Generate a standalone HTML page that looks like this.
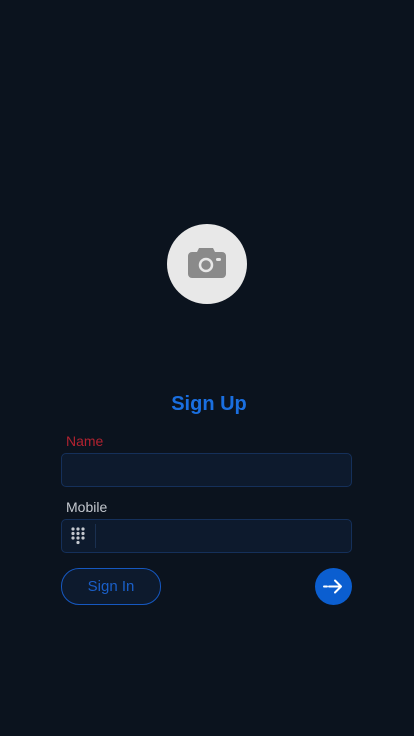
<!DOCTYPE html>
<html><head><style>
body{margin:0;width:414px;height:736px;background:#0b131e;position:relative;font-family:"Liberation Sans",sans-serif;overflow:hidden}
.a{position:absolute}
.inp{position:absolute;left:61px;width:289px;height:32px;border:1px solid #15305a;border-radius:5px;background:#0d1a2d}
</style></head><body>
<div class="a" style="left:167px;top:224px;width:80px;height:80px;border-radius:50%;background:#e8e8e8"></div>
<svg class="a" style="left:185px;top:244px" width="44" height="40" viewBox="0 0 44 40">
<path d="M14 4 h14 l2 4 h7 a4 4 0 0 1 4 4 v18 a4 4 0 0 1 -4 4 h-30 a4 4 0 0 1 -4 -4 v-18 a4 4 0 0 1 4 -4 h5z" fill="#8a8a8a"/>
<circle cx="21" cy="21" r="6" fill="none" stroke="#e8e8e8" stroke-width="2.5"/>
<rect x="31" y="14" width="5" height="3" rx="1.5" fill="#e8e8e8"/>
</svg>
<div class="a" style="left:0;width:414px;top:393px;text-align:center;color:#1a6fe0;font-weight:bold;font-size:20px;padding-left:4px;box-sizing:border-box">Sign Up</div>
<div class="a" style="left:66px;top:433px;color:#b02230;font-size:14px">Name</div>
<div class="inp" style="top:453px"></div>
<div class="a" style="left:66px;top:499px;color:#c4c8cf;font-size:14px">Mobile</div>
<div class="inp" style="top:519px"></div>
<svg class="a" style="left:70px;top:526px" width="16" height="20">
<g fill="#c4c8cf"><circle cx="3" cy="3" r="1.6"/><circle cx="8" cy="3" r="1.6"/><circle cx="13" cy="3" r="1.6"/>
<circle cx="3" cy="7.5" r="1.6"/><circle cx="8" cy="7.5" r="1.6"/><circle cx="13" cy="7.5" r="1.6"/>
<circle cx="3" cy="12" r="1.6"/><circle cx="8" cy="12" r="1.6"/><circle cx="13" cy="12" r="1.6"/>
<circle cx="8" cy="16.5" r="1.6"/></g></svg>
<div class="a" style="left:95px;top:524px;width:1px;height:24px;background:#1a3050"></div>
<div class="a" style="left:61px;top:568px;width:98px;height:35px;border:1px solid #1658c0;border-radius:18px;background:#0d1a2d;color:#1a5fc8;font-size:15px;text-align:center;line-height:35px">Sign In</div>
<div class="a" style="left:315px;top:568px;width:37px;height:37px;border-radius:50%;background:#0b5ed0"></div>
<svg class="a" style="left:315px;top:568px" width="37" height="37"><path d="M9 18.5h3M14 18.5h12M20 12.5l6 6-6 6" stroke="#fff" stroke-width="2" fill="none" stroke-linecap="round" stroke-linejoin="round"/></svg>
</body></html>
